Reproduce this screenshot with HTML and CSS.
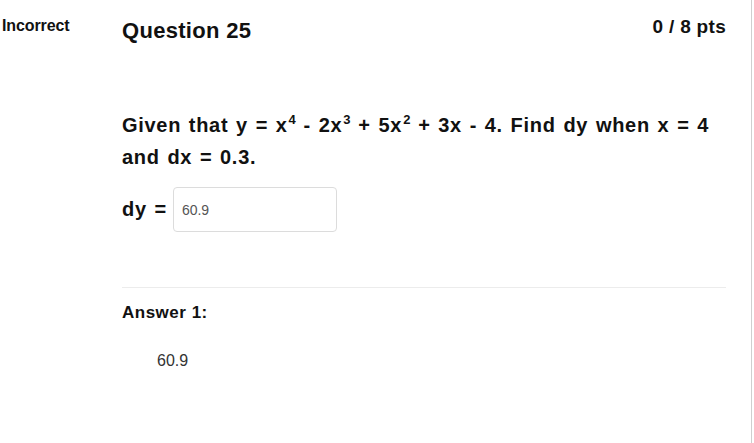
FILE: index.html
```html
<!DOCTYPE html>
<html>
<head>
<meta charset="utf-8">
<link rel="stylesheet" href="styles.css">
</head>
<body>
<div class="page">
  <div class="status">Incorrect</div>
  <div class="question">
    <div class="header">
      <div class="title">Question 25</div>
      <div class="pts">0 / 8 pts</div>
    </div>
    <div class="text">Given that y = x<sup>4</sup> - 2x<sup>3</sup> + 5x<sup>2</sup> + 3x - 4. Find dy when x = 4 and dx = 0.3.</div>
    <div class="dy-row">
      <span class="dy-label">dy =</span>
      <div class="input">60.9</div>
    </div>
    <div class="sep"></div>
    <div class="answer-label">Answer 1:</div>
    <div class="answer-value">60.9</div>
  </div>
</div>
</body>
</html>
```
FILE: styles.css
```css
html, body {
  margin: 0;
  padding: 0;
  background: #fff;
}
body {
  font-family: "Liberation Sans", Arial, sans-serif;
  color: #111;
}
.page {
  display: flex;
  box-sizing: border-box;
  width: 752px;
  height: 443px;
  border-right: 1px solid #cfcfcf;
}
.status {
  width: 120px;
  flex: none;
  padding: 17px 0 0 2px;
  font-size: 16px;
  font-weight: bold;
  letter-spacing: -0.1px;
}
.question {
  flex: 1;
  padding: 0 25px 0 0;
}
.header {
  display: flex;
  justify-content: space-between;
  align-items: flex-start;
  padding-top: 16px;
}
.title {
  font-size: 22px;
  font-weight: bold;
  margin-top: 2px;
  letter-spacing: 0.3px;
}
.pts {
  font-size: 19px;
  font-weight: bold;
  letter-spacing: 0.3px;
}
.text {
  margin-top: 65px;
  font-size: 20px;
  font-weight: bold;
  line-height: 32px;
  letter-spacing: 0.7px;
  word-spacing: 1.5px;
}
.text sup {
  display: inline-block;
  font-size: 13px;
  line-height: 13px;
  vertical-align: 8px;
  letter-spacing: 0;
  margin-left: 1px;
}
.dy-row {
  display: flex;
  align-items: center;
  gap: 6px;
  margin-top: 14px;
}
.dy-label {
  font-size: 20px;
  font-weight: bold;
  letter-spacing: 0.7px;
  word-spacing: 1.5px;
}
.input {
  box-sizing: border-box;
  width: 164px;
  height: 45px;
  border: 1px solid #dcdcdc;
  border-radius: 4px;
  padding: 0 8px;
  display: flex;
  align-items: center;
  font-size: 14px;
  color: #555;
}
.sep {
  margin-top: 55px;
  height: 1px;
  background: #ececec;
}
.answer-label {
  margin-top: 15px;
  font-size: 17px;
  font-weight: bold;
  letter-spacing: 0.5px;
}
.answer-value {
  margin-top: 29px;
  padding-left: 35px;
  font-size: 16px;
  color: #333;
}
```
